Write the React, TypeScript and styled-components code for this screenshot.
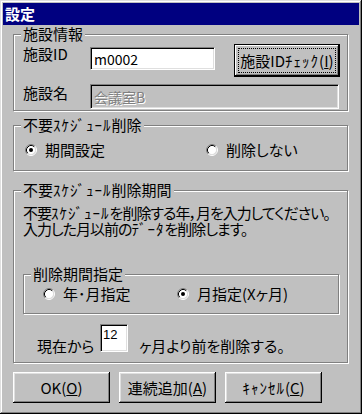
import styled, { createGlobalStyle } from "styled-components"

const GlobalStyle = createGlobalStyle`
  body { margin: 0; background: #c0c0c0; }
  * { box-sizing: border-box; }
`

const Window = styled.div`
  width: 362px;
  height: 414px;
  padding: 3px;
  background: #c0c0c0;
  box-shadow: inset -1px -1px #000, inset 1px 1px #dfdfdf, inset -2px -2px #808080, inset 2px 2px #fff;
  font-family: "Noto Sans CJK JP", sans-serif;
  font-size: 15px;
  color: #000;
  font-feature-settings: "palt";
`

const TitleBar = styled.div`
  height: 22px;
  line-height: 22px;
  padding-left: 2px;
  background: #000080;
  color: #fff;
  font-weight: 700;
`

const Body = styled.div`
  padding: 9px 11px 0 10px;
`

// half-width katakana: keep them as wide as the old UI font drew them
const Hankaku = styled.span`
  font-feature-settings: normal;
  letter-spacing: 1px;
`

const Group = styled.div<{ $mt: number; $h: number; $ml?: number; $w?: number }>`
  margin-top: ${p => p.$mt}px;
  margin-left: ${p => p.$ml ?? 0}px;
  width: ${p => (p.$w ? `${p.$w}px` : "auto")};
  height: ${p => p.$h}px;
  border: 1px solid #808080;
  box-shadow: inset 1px 1px #fff, 1px 1px #fff;
`

const Legend = styled.div`
  width: fit-content;
  height: 16px;
  line-height: 16px;
  margin: -9px 0 -7px 7px;
  padding: 0 2px;
  background: #c0c0c0;
  white-space: nowrap;
`

const Row = styled.div<{ $mt: number; $pl: number }>`
  display: flex;
  align-items: flex-start;
  margin-top: ${p => p.$mt}px;
  padding-left: ${p => p.$pl}px;
`

const Label = styled.div<{ $w: number; $mt: number; $ml?: number }>`
  width: ${p => p.$w}px;
  margin-top: ${p => p.$mt}px;
  margin-left: ${p => p.$ml ?? 0}px;
  line-height: 16px;
  white-space: nowrap;
`

const TextBox = styled.input<{ $w: number; $h: number; $mt?: number }>`
  width: ${p => p.$w}px;
  height: ${p => p.$h}px;
  margin: ${p => p.$mt ?? 0}px 0 0 0;
  padding: 0 3px;
  border: 1px solid;
  border-color: #808080 #fff #fff #808080;
  box-shadow: inset 1px 1px #000, inset -1px -1px #dfdfdf;
  background: #fff;
  font-family: inherit;
  font-size: 14px;
  color: #000;
  outline: none;
  &:disabled {
    background: #c0c0c0;
    color: #808080;
    -webkit-text-fill-color: #808080;
    text-shadow: 1px 1px #fff;
  }
`

const SmallBox = styled(TextBox)`
  padding: 1px 2px 9px 2px;
  font-family: "Liberation Sans", sans-serif;
  font-size: 13px;
`

const Button = styled.button<{ $w: number; $h: number; $default?: boolean; $ml?: number }>`
  display: flex;
  align-items: stretch;
  width: ${p => p.$w}px;
  height: ${p => p.$h}px;
  margin-left: ${p => p.$ml ?? 0}px;
  padding: ${p => (p.$default ? "3px" : "0")};
  background: #c0c0c0;
  border: ${p => (p.$default ? "1px solid #000" : "none")};
  box-shadow: ${p =>
    p.$default
      ? "inset -1px -1px #000, inset 1px 1px #fff, inset -2px -2px #808080"
      : "inset -1px -1px #000, inset 1px 1px #fff, inset -2px -2px #808080, inset 2px 2px #dfdfdf"};
  font-family: inherit;
  font-size: 15px;
  font-feature-settings: "palt";
  color: #000;
  cursor: default;
`

const Caption = styled.span<{ $focus?: boolean }>`
  flex: 1;
  display: flex;
  align-items: center;
  justify-content: center;
  white-space: nowrap;
  border: ${p => (p.$focus ? "1px dotted #000" : "none")};
`

const RadioRow = styled.div<{ $mt: number; $pl: number }>`
  display: flex;
  align-items: center;
  height: 16px;
  margin-top: ${p => p.$mt}px;
  padding-left: ${p => p.$pl}px;
`

const Option = styled.label<{ $w?: number }>`
  display: flex;
  align-items: center;
  gap: 8px;
  width: ${p => (p.$w ? `${p.$w}px` : "auto")};
  line-height: 16px;
  white-space: nowrap;
`

const Note = styled.div`
  margin-top: 14px;
  padding-left: 9px;
  letter-spacing: -1px;
`

const NoteLine = styled.div`
  height: 16px;
  line-height: 16px;
  white-space: nowrap;
`

const ButtonBar = styled.div`
  display: flex;
  gap: 9px;
  margin-top: 9px;
`

function Radio({ checked }: { checked?: boolean }) {
  return (
    <svg width="12" height="12" viewBox="0 0 12 12">
      <circle cx="6" cy="6" r="4.5" fill="#fff" />
      <path d="M2.11 9.89 A5.5 5.5 0 0 1 9.89 2.11" fill="none" stroke="#808080" />
      <path d="M9.89 2.11 A5.5 5.5 0 0 1 2.11 9.89" fill="none" stroke="#fff" />
      <path d="M2.82 9.18 A4.5 4.5 0 0 1 9.18 2.82" fill="none" stroke="#000" />
      <path d="M9.18 2.82 A4.5 4.5 0 0 1 2.82 9.18" fill="none" stroke="#dfdfdf" />
      {checked && <circle cx="6" cy="6" r="2" fill="#000" />}
    </svg>
  )
}

export default function App() {
  return (
    <>
      <GlobalStyle />
      <Window>
        <TitleBar>設定</TitleBar>
        <Body>
          <Group $mt={0} $h={77}>
            <Legend>施設情報</Legend>
            <Row $mt={9} $pl={9}>
              <Label $w={67} $mt={2}>施設ID</Label>
              <TextBox $w={125} $h={23} $mt={3} defaultValue="m0002" readOnly />
              <Button $w={106} $h={33} $ml={19} $default>
                <Caption $focus>
                  施設ID<Hankaku>ﾁｪｯｸ</Hankaku>(<u>I</u>)
                </Caption>
              </Button>
            </Row>
            <Row $mt={7} $pl={9}>
              <Label $w={67} $mt={1}>施設名</Label>
              <TextBox $w={249} $h={25} value="会議室B" disabled />
            </Row>
          </Group>

          <Group $mt={14} $h={46}>
            <Legend>
              不要<Hankaku>ｽｹｼﾞｭｰﾙ</Hankaku>削除
            </Legend>
            <RadioRow $mt={16} $pl={11}>
              <Option $w={181}>
                <Radio checked />
                期間設定
              </Option>
              <Option>
                <Radio />
                削除しない
              </Option>
            </RadioRow>
          </Group>

          <Group $mt={19} $h={173}>
            <Legend>
              不要<Hankaku>ｽｹｼﾞｭｰﾙ</Hankaku>削除期間
            </Legend>
            <Note>
              <NoteLine>
                不要<Hankaku>ｽｹｼﾞｭｰﾙ</Hankaku>を削除する年，月を入力してください。
              </NoteLine>
              <NoteLine>
                入力した月以前の<Hankaku>ﾃﾞｰﾀ</Hankaku>を削除します。
              </NoteLine>
            </Note>
            <Group $mt={37} $h={40} $ml={9} $w={316}>
              <Legend>削除期間指定</Legend>
              <RadioRow $mt={11} $pl={19}>
                <Option $w={134}>
                  <Radio />
                  年･月指定
                </Option>
                <Option>
                  <Radio checked />
                  月指定(Xヶ月)
                </Option>
              </RadioRow>
            </Group>
            <Row $mt={10} $pl={23}>
              <Label $w={63} $mt={14}>現在から</Label>
              <SmallBox $w={28} $h={28} defaultValue="12" readOnly />
              <Label $w={200} $mt={14} $ml={11}>ヶ月より前を削除する。</Label>
            </Row>
          </Group>

          <ButtonBar>
            <Button $w={97} $h={31}>
              <Caption>OK(<u>O</u>)</Caption>
            </Button>
            <Button $w={97} $h={31}>
              <Caption>連続追加(<u>A</u>)</Caption>
            </Button>
            <Button $w={97} $h={31}>
              <Caption>
                <Hankaku>ｷｬﾝｾﾙ</Hankaku>(<u>C</u>)
              </Caption>
            </Button>
          </ButtonBar>
        </Body>
      </Window>
    </>
  )
}
